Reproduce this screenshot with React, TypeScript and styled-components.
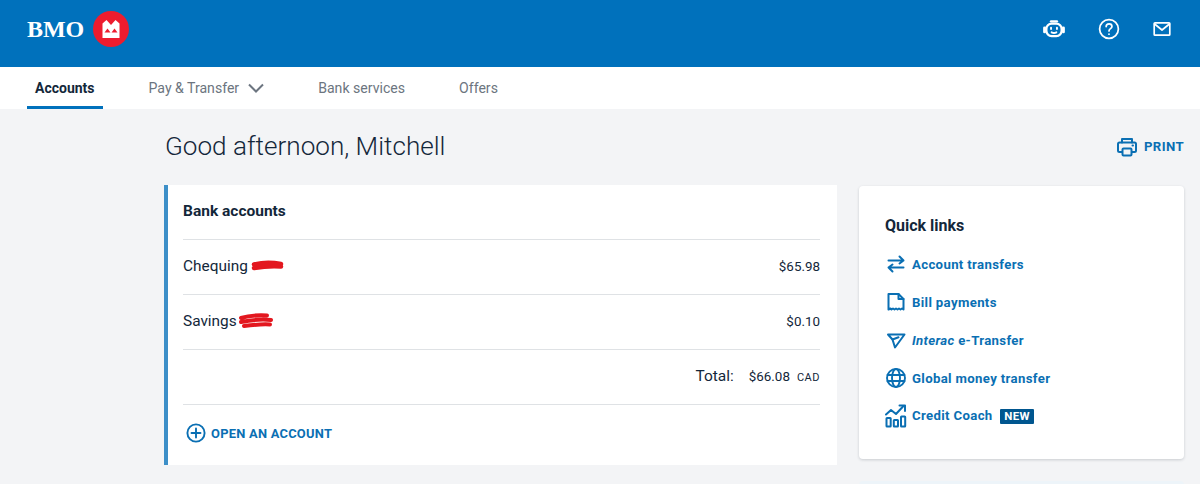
import React, { ReactElement, ReactNode } from 'react';
import styled, { createGlobalStyle } from 'styled-components';

const BLUE = '#0071bc';
const LINK = '#0a6fb3';
const INK = '#13273a';

const GlobalStyle = createGlobalStyle`
  html, body {
    margin: 0;
    padding: 0;
    background: #f3f4f6;
    font-family: Roboto, "Liberation Sans", sans-serif;
    overflow: hidden;
  }
`;

const Page = styled.div`
  width: 1200px;
  height: 484px;
  overflow: hidden;
`;

const Header = styled.header`
  height: 67px;
  box-sizing: border-box;
  background: ${BLUE};
  display: flex;
  align-items: center;
  justify-content: space-between;
  padding: 0 27px 9px 27px;
`;

const Logo = styled.div`
  display: flex;
  align-items: center;
  gap: 9px;
`;

const LogoText = styled.span`
  color: #fff;
  font-family: "Liberation Serif", serif;
  font-weight: 700;
  font-size: 24px;
  letter-spacing: -0.1px;
`;

const HeaderIcons = styled.div`
  display: flex;
  align-items: center;
  gap: 30px;
`;

const Nav = styled.nav`
  height: 42px;
  background: #fff;
  display: flex;
  padding-left: 27px;
  gap: 38px;
`;

const Tab = styled.a<{ $active?: boolean }>`
  display: flex;
  align-items: center;
  gap: 9px;
  box-sizing: border-box;
  height: 42px;
  padding: 2px 8px 0;
  font-size: ${(p) => (p.$active ? 14 : 14.1)}px;
  font-weight: ${(p) => (p.$active ? 700 : 400)};
  color: ${(p) => (p.$active ? INK : '#6c7580')};
  border-bottom: 3px solid ${(p) => (p.$active ? BLUE : 'transparent')};
`;

const Main = styled.main`
  padding: 0 16px 0 164px;
`;

const TitleRow = styled.div`
  height: 76px;
  display: flex;
  align-items: center;
  justify-content: space-between;
`;

const Greeting = styled.h1`
  margin: 0 0 2px 1px;
  font-size: 26.1px;
  font-weight: 300;
  color: ${INK};
`;

const PrintButton = styled.a`
  display: flex;
  align-items: center;
  gap: 6px;
  margin-bottom: 1px;
  font-size: 13.2px;
  font-weight: 700;
  letter-spacing: 0.4px;
  color: ${LINK};
`;

const Columns = styled.div`
  display: grid;
  grid-template-columns: 673px 325px;
  gap: 22px;
  align-items: start;
`;

const AccountsCard = styled.section`
  height: 280px;
  box-sizing: border-box;
  background: #fff;
  border-left: 4px solid #3d8fc8;
  padding: 0 17px 0 15px;
`;

const CardTitle = styled.h2`
  margin: 0;
  height: 54px;
  line-height: 53px;
  font-size: 15.5px;
  font-weight: 700;
  color: ${INK};
  border-bottom: 1px solid #dfe2e5;
`;

const Row = styled.div`
  height: 52px;
  padding-bottom: 2px;
  display: flex;
  align-items: center;
  justify-content: space-between;
  border-bottom: 1px solid #dfe2e5;
  font-size: 15.4px;
  color: ${INK};
`;

const RowName = styled.span`
  display: flex;
  align-items: center;
  gap: 3px;
`;

const SavingsName = styled(RowName)`
  gap: 1px;
`;

const Amount = styled.span`
  font-size: 13.4px;
`;

const TotalRow = styled(Row)`
  justify-content: flex-end;
  gap: 15px;
  font-size: 15.5px;
`;

const TotalAmount = styled.span`
  display: flex;
  align-items: baseline;
  gap: 7px;
  font-size: 13.4px;
`;

const Currency = styled.span`
  font-size: 11px;
  letter-spacing: 0.5px;
`;

const OpenAccount = styled.a`
  display: flex;
  align-items: center;
  gap: 4px;
  height: 56px;
  padding-left: 2px;
  font-size: 12.9px;
  font-weight: 700;
  letter-spacing: 0.25px;
  color: ${LINK};
`;

const QuickCard = styled.aside`
  height: 273px;
  box-sizing: border-box;
  margin-top: 1px;
  background: #fff;
  border-radius: 4px;
  box-shadow: 0 1px 3px rgba(40, 50, 60, 0.2);
  padding: 30px 0 0 26px;
`;

const QuickTitle = styled.h2`
  margin: 0 0 9px;
  font-size: 16px;
  line-height: 20px;
  font-weight: 700;
  color: ${INK};
`;

const QuickList = styled.ul`
  list-style: none;
  margin: 0;
  padding: 0;
`;

const QuickItem = styled.li`
  height: 38px;
  display: flex;
  align-items: center;
  gap: 5px;
  font-size: 13.2px;
  font-weight: 700;
  letter-spacing: 0.34px;
  color: ${LINK};
`;

const IconSlot = styled.span`
  width: 22px;
  height: 22px;
  display: flex;
  align-items: center;
  justify-content: center;
`;

const NewBadge = styled.span`
  margin-left: 4px;
  background: #00568f;
  color: #fff;
  font-size: 11.5px;
  font-weight: 700;
  line-height: 15px;
  padding: 0 4px;
  border-radius: 1px;
  display: inline-block;
`;

const NextCard = styled.div`
  height: 10px;
  margin: 22px 0 0 0;
  background: #edf4f9;
  border-radius: 4px 4px 0 0;
`;

interface GlyphProps {
  size?: number;
  color?: string;
  width?: number;
  children: ReactNode;
}

function Glyph({ size = 22, color = LINK, width = 2, children }: GlyphProps): ReactElement {
  return (
    <svg width={size} height={size} viewBox="0 0 22 22" fill="none" stroke={color} strokeWidth={width} strokeLinecap="round" strokeLinejoin="round">
      {children}
    </svg>
  );
}

const BmoMark = (): ReactElement => (
  <svg width="36" height="36" viewBox="0 0 36 36">
    <circle cx="18" cy="18" r="18" fill="#ed1c2e" />
    <path d="M9.500 27V12.500l4-3.500 4.500 5 4.500-5 4 3.500V27Z" fill="#fff" />
    <path d="M11.500 21.500l3-4 3 4ZM18.500 21.500l3-4 3 4Z" fill="#ed1c2e" />
  </svg>
);

const RobotIcon = (): ReactElement => (
  <Glyph size={26} color="#fff">
    <rect x="4.500" y="6.500" width="13" height="10.500" rx="4.500" />
    <path d="M8.500 4.500h5" />
    <path d="M3 10v3.500M19 10v3.500" strokeWidth={2.4} />
    <path d="M8.500 10v1M13.500 10v1M9 13.800c1.200.7 2.800.7 4 0" strokeWidth={1.6} />
  </Glyph>
);

const HelpIcon = (): ReactElement => (
  <Glyph size={24} color="#fff" width={1.6}>
    <circle cx="11" cy="11" r="8.600" />
    <path d="M8.400 8.800c0-1.500 1.200-2.500 2.700-2.500s2.600 1 2.600 2.300c0 2.200-2.700 2-2.700 4.200" />
    <path d="M11 15.600v.2" />
  </Glyph>
);

const MailIcon = (): ReactElement => (
  <Glyph size={22} color="#fff" width={1.7}>
    <rect x="3.200" y="4.800" width="15.600" height="12.400" rx="0.8" />
    <path d="M3.600 6l7.400 6 7.400-6" />
  </Glyph>
);

const Chevron = (): ReactElement => (
  <svg width="16" height="10" viewBox="0 0 16 10" fill="none" stroke="#6c7580" strokeWidth="2">
    <path d="M1 1.500l7 7 7-7" />
  </svg>
);

const PrinterIcon = (): ReactElement => (
  <Glyph size={22}>
    <path d="M6 6.500V3h10v3.500" />
    <path d="M6 16H3.500a1.500 1.500 0 0 1-1.500-1.500V8a1.500 1.500 0 0 1 1.500-1.500h15A1.500 1.500 0 0 1 20 8v6.500a1.500 1.500 0 0 1-1.500 1.500H16" />
    <rect x="6.500" y="12.500" width="9" height="7" rx="1" />
    <path d="M16.500 9.500h.5" />
  </Glyph>
);

const PlusCircleIcon = (): ReactElement => (
  <Glyph size={22} width={1.9}>
    <circle cx="11" cy="11" r="8.600" />
    <path d="M11 6.500v9M6.500 11h9" />
  </Glyph>
);

const TransferIcon = (): ReactElement => (
  <Glyph width={2}>
    <path d="M3.500 7.500h15M14.500 3.500l4 4-4 3" />
    <path d="M18.500 14.500h-15M7.500 11.500l-4 3 4 4" />
  </Glyph>
);

const BillIcon = (): ReactElement => (
  <Glyph width={2}>
    <path d="M3.500 18.500V3h10l5 5v10.500l-1.500-1-1.500 1-1.500-1-1.500 1-1.500-1-1.500 1-1.500-1-1.500 1-1-1Z" />
    <path d="M13.500 3v5h5" />
  </Glyph>
);

const SendIcon = (): ReactElement => (
  <Glyph width={2}>
    <path d="M3 5.500h16.500L10 18.500 7.500 10.500 3 5.500Z" />
    <path d="M7.500 10.500l6-2.200" />
  </Glyph>
);

const GlobeIcon = (): ReactElement => (
  <Glyph width={1.9}>
    <circle cx="11" cy="11" r="9" />
    <ellipse cx="11" cy="11" rx="4" ry="9" />
    <path d="M2.500 8h17M2.500 14h17" />
  </Glyph>
);

const ChartIcon = (): ReactElement => (
  <svg width="22" height="24" viewBox="0 0 22 24" fill="none" stroke={LINK} strokeWidth="2" strokeLinecap="round" strokeLinejoin="round">
    <path d="M1 10.500l5-4.500 5 4 7-7.500" />
    <path d="M14.500 1.500H20V7" />
    <rect x="1.500" y="14" width="4.200" height="8.500" rx="0.5" />
    <rect x="8.800" y="16" width="4.200" height="6.500" rx="0.5" />
    <rect x="16" y="12.500" width="4.200" height="10" rx="0.5" />
  </svg>
);

const ChequingScribble = (): ReactElement => (
  <svg width="33" height="14" viewBox="0 0 33 14" fill="none" stroke="#e3171f" strokeLinecap="round">
    <path d="M3 5.500c8-2 19-2 27-.5M3 9c9-1.500 19-2 27-1.500" strokeWidth="4.500" />
  </svg>
);

const SavingsScribble = (): ReactElement => (
  <svg width="36" height="17" viewBox="0 0 36 17" fill="none" stroke="#e3171f" strokeLinecap="round">
    <path d="M3 5c8-2.500 16-3 26-2.500M3 9c10-2 20-3 30-2M6 13c8-1 18-2 26-1.500" strokeWidth="4" />
  </svg>
);

interface QuickLink {
  icon: ReactElement;
  label: ReactNode;
}

const quickLinks: QuickLink[] = [
  { icon: <TransferIcon />, label: 'Account transfers' },
  { icon: <BillIcon />, label: 'Bill payments' },
  { icon: <SendIcon />, label: <span><i>Interac</i> e-Transfer</span> },
  { icon: <GlobeIcon />, label: 'Global money transfer' },
  { icon: <ChartIcon />, label: <span>Credit Coach <NewBadge>NEW</NewBadge></span> }
];

export default function App(): ReactElement {
  return (
    <Page>
      <GlobalStyle />
      <Header>
        <Logo>
          <LogoText>BMO</LogoText>
          <BmoMark />
        </Logo>
        <HeaderIcons>
          <RobotIcon />
          <HelpIcon />
          <MailIcon />
        </HeaderIcons>
      </Header>
      <Nav>
        <Tab $active>Accounts</Tab>
        <Tab>Pay &amp; Transfer <Chevron /></Tab>
        <Tab>Bank services</Tab>
        <Tab>Offers</Tab>
      </Nav>
      <Main>
        <TitleRow>
          <Greeting>Good afternoon, Mitchell</Greeting>
          <PrintButton><PrinterIcon />PRINT</PrintButton>
        </TitleRow>
        <Columns>
          <AccountsCard>
            <CardTitle>Bank accounts</CardTitle>
            <Row>
              <RowName>Chequing <ChequingScribble /></RowName>
              <Amount>$65.98</Amount>
            </Row>
            <Row>
              <SavingsName>Savings <SavingsScribble /></SavingsName>
              <Amount>$0.10</Amount>
            </Row>
            <TotalRow>
              Total:
              <TotalAmount>$66.08 <Currency>CAD</Currency></TotalAmount>
            </TotalRow>
            <OpenAccount><PlusCircleIcon />OPEN AN ACCOUNT</OpenAccount>
          </AccountsCard>
          <div>
            <QuickCard>
              <QuickTitle>Quick links</QuickTitle>
              <QuickList>
                {quickLinks.map((link, index) => (
                  <QuickItem key={index}>
                    <IconSlot>{link.icon}</IconSlot>
                    {link.label}
                  </QuickItem>
                ))}
              </QuickList>
            </QuickCard>
            <NextCard />
          </div>
        </Columns>
      </Main>
    </Page>
  );
}
